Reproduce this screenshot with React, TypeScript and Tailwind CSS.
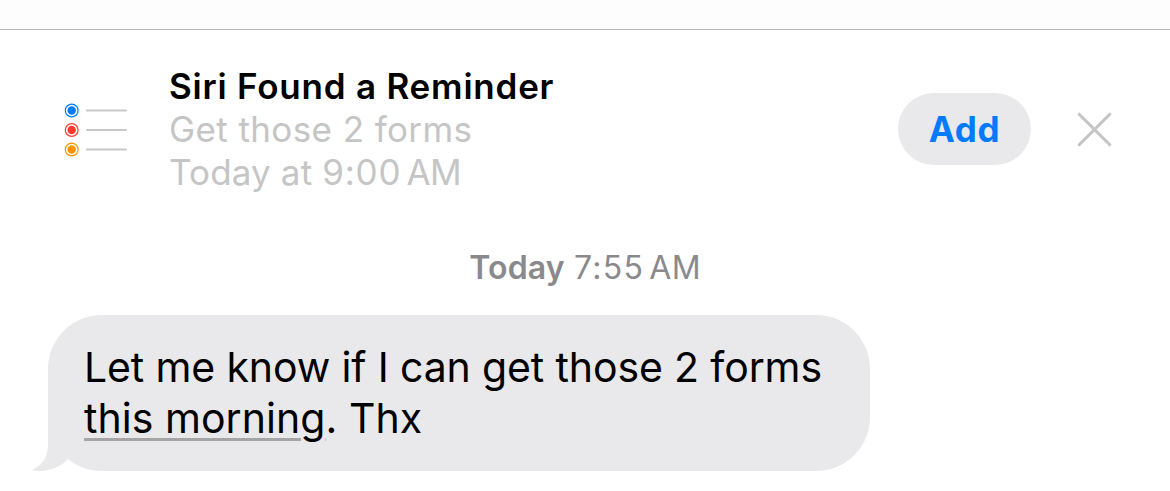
const items = [
  { y: 10.5, color: '#007aff' },
  { y: 30, color: '#ff3b30' },
  { y: 49.5, color: '#ff9500' },
];

function RemindersIcon() {
  return (
    <svg className="h-[60px] w-16 shrink-0" viewBox="0 0 64 60" fill="none">
      {items.map((item) => (
        <g key={item.color}>
          <circle cx="7.7" cy={item.y} r="6.4" stroke={item.color} strokeWidth="1.2" />
          <circle cx="7.7" cy={item.y} r="4.2" fill={item.color} />
          <path d={`M23 ${item.y}H62`} stroke="#c8c8c8" strokeWidth="2.2" strokeLinecap="round" />
        </g>
      ))}
    </svg>
  );
}

function ReminderBanner() {
  return (
    <section className="flex h-[200px] items-center pr-[57px] pl-16">
      <RemindersIcon />
      <div className="mb-px ml-[41px] flex-1 text-[35px] leading-[43px] whitespace-nowrap text-[#c5c5c5]">
        <h1 className="font-semibold tracking-[0.78px] text-black">Siri Found a Reminder</h1>
        <p className="tracking-[0.4px]">Get those 2 forms</p>
        <p>
          <span className="tracking-[0.15px]">Today at </span>
          <span className="tracking-[0.8px]">9:00</span>
          <span className="ml-[5px] tracking-[-0.5px]">AM</span>
        </p>
      </div>
      <button className="mb-0.5 h-[72px] w-[133px] rounded-full bg-[#e9e9eb] text-[35px] font-bold tracking-[0.6px] text-[#007aff]">
        Add
      </button>
      <button className="mb-0.5 ml-[45px]" aria-label="Dismiss">
        <svg className="size-[37px]" viewBox="0 0 37 37" fill="none">
          <path d="M3.2 3.2L33.8 33.8M33.8 3.2L3.2 33.8" stroke="#c4c4c4" strokeWidth="3" strokeLinecap="round" />
        </svg>
      </button>
    </section>
  );
}

function MessageBubble() {
  return (
    <div className="relative ml-12 h-[156px] w-[822px] rounded-[54px] bg-[#e9e9eb] pt-[27px] pl-9 text-[41px] leading-[51px] tracking-[-0.13px] whitespace-nowrap text-black">
      <svg className="absolute bottom-0 -left-4 h-[60px] w-12" viewBox="0 0 48 60">
        <path d="M16 0V32C16 45 12 53 0 59C14 62 27 57 35 49L48 40V0Z" fill="#e9e9eb" />
      </svg>
      <p className="relative">Let me know if I can get those 2 forms</p>
      <p className="relative tracking-[0.05px]">
        <span className="underline decoration-[#a5a5a8] decoration-[3px] underline-offset-[5px]">this morning</span>. Thx
      </p>
    </div>
  );
}

export default function App() {
  return (
    <main className="h-[491px] overflow-hidden bg-white font-[Inter,sans-serif]">
      <div className="h-[30px] border-b border-[#b3b3b3] bg-[#fdfdfd]" />
      <ReminderBanner />
      <div className="flex h-[85px] justify-center pt-[13px] text-[32px] leading-[50px] text-[#8a8a8d]">
        <p>
          <span className="font-semibold tracking-[0.2px]">Today</span>{' '}
          <span className="tracking-[1.3px]">7:55</span>
          <span className="ml-[5px] tracking-[0.3px]">AM</span>
        </p>
      </div>
      <MessageBubble />
    </main>
  );
}
